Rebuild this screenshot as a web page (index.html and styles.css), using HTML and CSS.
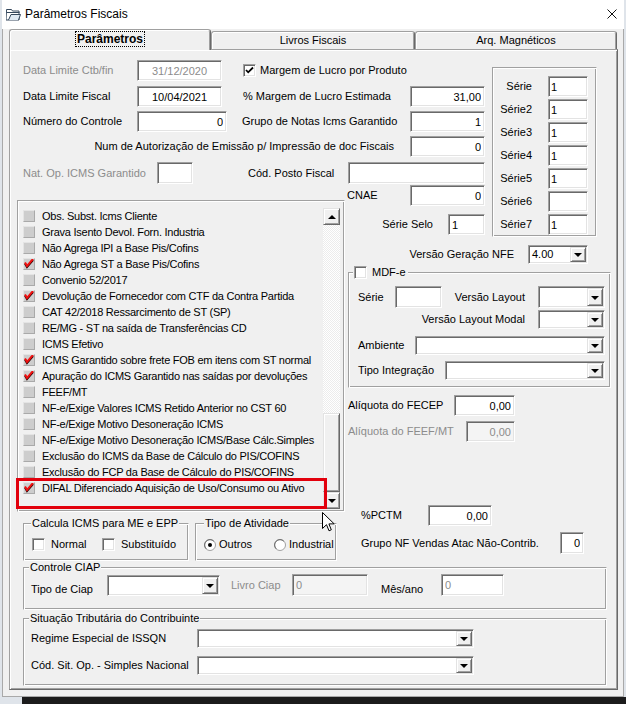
FILE: index.html
```html
<!DOCTYPE html>
<html lang="pt-BR">
<head>
    <meta charset="UTF-8">
    <title>Parâmetros Fiscais</title>
    <link rel="stylesheet" href="styles.css">
</head>
<body>
<div class="window">
    <div class="titlebar">
        <svg class="app-icon" width="15" height="13" viewBox="0 0 15 13">
            <path d="M0.5 1.5h5l1 1.5h6.5v9h-13z" fill="#fff" stroke="#34475c"/>
            <path d="M0.5 4.5h13" stroke="#34475c"/>
            <path d="M2.5 12l2.5-5.5h9.5l-2 5.5" fill="#dfe9f3" stroke="#34475c"/>
        </svg>
        <span class="title">Parâmetros Fiscais</span>
        <svg class="close" width="10" height="10" viewBox="0 0 10 10">
            <path d="M0.5 0.5L9.5 9.5M9.5 0.5L0.5 9.5" stroke="#111" stroke-width="1"/>
        </svg>
    </div>

    <div class="tabs">
        <div class="tab active"><span class="focus">Parâmetros</span></div>
        <div class="tab">Livros Fiscais</div>
        <div class="tab last">Arq. Magnéticos</div>
    </div>

    <div class="page">
        <!-- campos do topo -->
        <div class="top-fields">
            <div class="row">
                <label class="lbl w114 dis">Data Limite Ctb/fin</label>
                <input class="edit w85 center dis" value="31/12/2020" readonly>
                <span class="check ml21"><svg viewBox="0 0 9 9" width="9" height="9"><path d="M1 4l2.2 2.3L8 1.5" fill="none" stroke="#000" stroke-width="1.8"/></svg></span>
                <label class="lbl ml4">Margem de Lucro por Produto</label>
            </div>
            <div class="row mt5">
                <label class="lbl w114">Data Limite Fiscal</label>
                <input class="edit w85 center" value="10/04/2021" readonly>
                <label class="lbl ml21">% Margem de Lucro Estimada</label>
                <input class="edit w75 right push" value="31,00" readonly>
            </div>
            <div class="row mt4">
                <label class="lbl w114">Número do Controle</label>
                <input class="edit w90 right" value="0" readonly>
                <label class="lbl ml15">Grupo de Notas Icms Garantido</label>
                <input class="edit w75 right push" value="1" readonly>
            </div>
            <div class="row mt4">
                <label class="lbl push">Num de Autorização de Emissão p/ Impressão de doc Fiscais</label>
                <input class="edit w75 right ml16" value="0" readonly>
            </div>
            <div class="row tall mt5">
                <label class="lbl w134 dis">Nat. Op. ICMS Garantido</label>
                <input class="edit w36" value="" readonly>
                <label class="lbl ml55">Cód. Posto Fiscal</label>
                <input class="edit w137 push" value="" readonly>
            </div>
        </div>

        <!-- séries -->
        <div class="series etched">
            <div class="row"><label class="lbl">Série</label><input class="edit" value="1" readonly></div>
            <div class="row"><label class="lbl">Série2</label><input class="edit" value="1" readonly></div>
            <div class="row"><label class="lbl">Série3</label><input class="edit" value="1" readonly></div>
            <div class="row"><label class="lbl">Série4</label><input class="edit" value="1" readonly></div>
            <div class="row"><label class="lbl">Série5</label><input class="edit" value="1" readonly></div>
            <div class="row"><label class="lbl">Série6</label><input class="edit" value="" readonly></div>
            <div class="row"><label class="lbl">Série7</label><input class="edit" value="1" readonly></div>
        </div>

        <div class="mid-fields">
            <div class="row">
                <label class="lbl">CNAE</label>
                <input class="edit w75 right push" value="0" readonly>
            </div>
            <div class="row mt8">
                <label class="lbl push">Série Selo</label>
                <input class="edit w37 ml15" value="1" readonly>
            </div>
        </div>

        <!-- lista de opções -->
        <div class="options etched">
            <div class="checklist">
                <div class="items">
                    <div class="item"><span class="box"></span>Obs. Subst. Icms Cliente</div>
                    <div class="item"><span class="box"></span>Grava Isento Devol. Forn. Industria</div>
                    <div class="item"><span class="box"></span>Não Agrega IPI a Base Pis/Cofins</div>
                    <div class="item"><span class="box"><svg class="tick" width="10" height="10" viewBox="0 0 10 10"><path d="M1 4.5l2 3.5 6-7" fill="none" stroke="#200" stroke-width="2"/><path d="M1 3.5l2 3.5 6-7" fill="none" stroke="#f01010" stroke-width="2"/></svg></span>Não Agrega ST a Base Pis/Cofins</div>
                    <div class="item"><span class="box"></span>Convenio 52/2017</div>
                    <div class="item"><span class="box"><svg class="tick" width="10" height="10" viewBox="0 0 10 10"><path d="M1 4.5l2 3.5 6-7" fill="none" stroke="#200" stroke-width="2"/><path d="M1 3.5l2 3.5 6-7" fill="none" stroke="#f01010" stroke-width="2"/></svg></span>Devolução de Fornecedor com CTF da Contra Partida</div>
                    <div class="item"><span class="box"></span>CAT 42/2018 Ressarcimento de ST (SP)</div>
                    <div class="item"><span class="box"></span>RE/MG - ST na saída de Transferências CD</div>
                    <div class="item"><span class="box"></span>ICMS Efetivo</div>
                    <div class="item"><span class="box"><svg class="tick" width="10" height="10" viewBox="0 0 10 10"><path d="M1 4.5l2 3.5 6-7" fill="none" stroke="#200" stroke-width="2"/><path d="M1 3.5l2 3.5 6-7" fill="none" stroke="#f01010" stroke-width="2"/></svg></span>ICMS Garantido sobre frete FOB em itens com ST normal</div>
                    <div class="item"><span class="box"><svg class="tick" width="10" height="10" viewBox="0 0 10 10"><path d="M1 4.5l2 3.5 6-7" fill="none" stroke="#200" stroke-width="2"/><path d="M1 3.5l2 3.5 6-7" fill="none" stroke="#f01010" stroke-width="2"/></svg></span>Apuração do ICMS Garantido nas saídas por devoluções</div>
                    <div class="item"><span class="box"></span>FEEF/MT</div>
                    <div class="item"><span class="box"></span>NF-e/Exige Valores ICMS Retido Anterior no CST 60</div>
                    <div class="item"><span class="box"></span>NF-e/Exige Motivo Desoneração ICMS</div>
                    <div class="item"><span class="box"></span>NF-e/Exige Motivo Desoneração ICMS/Base Cálc.Simples</div>
                    <div class="item"><span class="box"></span>Exclusão do ICMS da Base de Cálculo do PIS/COFINS</div>
                    <div class="item"><span class="box"></span>Exclusão do FCP da Base de Cálculo do PIS/COFINS</div>
                    <div class="item marked"><span class="box"><svg class="tick" width="10" height="10" viewBox="0 0 10 10"><path d="M1 4.5l2 3.5 6-7" fill="none" stroke="#200" stroke-width="2"/><path d="M1 3.5l2 3.5 6-7" fill="none" stroke="#f01010" stroke-width="2"/></svg></span>DIFAL Diferenciado Aquisição de Uso/Consumo ou Ativo</div>
                </div>
                <div class="scrollbar">
                    <div class="raised sb-btn"><span class="arrow-up"></span></div>
                    <div class="track"></div>
                    <div class="raised thumb"></div>
                    <div class="raised sb-btn"><span class="arrow-down"></span></div>
                </div>
            </div>
        </div>

        <!-- coluna direita -->
        <div class="right-col">
            <div class="row short nfe">
                <label class="lbl">Versão Geração NFE</label>
                <div class="combo w60 ml14"><span class="value">4.00</span><span class="raised drop"><span class="arrow-down"></span></span></div>
            </div>

            <fieldset class="group mdfe">
                <legend><span class="check"></span><span class="legend-text">MDF-e</span></legend>
                <div class="row tall">
                    <label class="lbl w37">Série</label>
                    <input class="edit w47" value="" readonly>
                    <label class="lbl push">Versão Layout</label>
                    <div class="combo w67 ml13"><span class="value"></span><span class="raised drop"><span class="arrow-down"></span></span></div>
                </div>
                <div class="row short mt2">
                    <label class="lbl push">Versão Layout Modal</label>
                    <div class="combo w67 ml13"><span class="value"></span><span class="raised drop"><span class="arrow-down"></span></span></div>
                </div>
                <div class="row short mt7">
                    <label class="lbl">Ambiente</label>
                    <div class="combo w190 push"><span class="value"></span><span class="raised drop"><span class="arrow-down"></span></span></div>
                </div>
                <div class="row short mt6">
                    <label class="lbl">Tipo Integração</label>
                    <div class="combo w160 push"><span class="value"></span><span class="raised drop"><span class="arrow-down"></span></span></div>
                </div>
            </fieldset>

            <div class="row mt7 ml3">
                <label class="lbl w106">Alíquota do FECEP</label>
                <input class="edit w61 right" value="0,00" readonly>
            </div>
            <div class="row mt5 ml3">
                <label class="lbl w118 dis">Alíquota do FEEF/MT</label>
                <input class="edit w49 right dis flat" value="0,00" readonly>
            </div>
            <div class="row mt63 ml16">
                <label class="lbl w67">%PCTM</label>
                <input class="edit w64 right" value="0,00" readonly>
            </div>
            <div class="row tall mt6 ml16">
                <label class="lbl w199">Grupo NF Vendas Atac Não-Contrib.</label>
                <input class="edit w24 right" value="0" readonly>
            </div>
        </div>

        <!-- grupos de ICMS -->
        <div class="icms-groups">
            <fieldset class="group small calc">
                <legend>Calcula ICMS para ME e EPP</legend>
                <div class="opts">
                    <div class="opt w70"><span class="check"></span><span class="opt-text">Normal</span></div>
                    <div class="opt"><span class="check"></span><span class="opt-text">Substituído</span></div>
                </div>
            </fieldset>
            <fieldset class="group small atividade">
                <legend>Tipo de Atividade</legend>
                <div class="opts">
                    <div class="opt w70">
                        <svg class="radio" width="12" height="12" viewBox="0 0 12 12"><circle cx="6" cy="6" r="5.5" fill="#fff" stroke="#a0a0a0"/><path d="M2.2 9.8A5 5 0 0 1 9.8 2.2" fill="none" stroke="#696969"/><circle cx="6" cy="6" r="2" fill="#000"/></svg>
                        <span class="opt-text tight">Outros</span>
                    </div>
                    <div class="opt">
                        <svg class="radio" width="12" height="12" viewBox="0 0 12 12"><circle cx="6" cy="6" r="5.5" fill="#fff" stroke="#a0a0a0"/><path d="M2.2 9.8A5 5 0 0 1 9.8 2.2" fill="none" stroke="#696969"/></svg>
                        <span class="opt-text tight">Industrial</span>
                    </div>
                </div>
            </fieldset>
        </div>

        <fieldset class="group ciap">
            <legend>Controle CIAP</legend>
            <div class="row tall">
                <label class="lbl w76 low">Tipo de Ciap</label>
                <div class="combo w113 h21"><span class="value"></span><span class="raised drop"><span class="arrow-down"></span></span></div>
                <label class="lbl w61 ml11 dis">Livro Ciap</label>
                <input class="edit w76 dis flat" value="0" readonly>
                <label class="lbl w60 ml13 low">Mês/ano</label>
                <input class="edit w63 dis" value="0" readonly>
            </div>
        </fieldset>

        <fieldset class="group situacao">
            <legend>Situação Tributária do Contribuinte</legend>
            <div class="row short">
                <label class="lbl w166">Regime Especial de ISSQN</label>
                <div class="combo w277"><span class="value"></span><span class="raised drop"><span class="arrow-down"></span></span></div>
            </div>
            <div class="row short mt8">
                <label class="lbl w166">Cód. Sit. Op. - Simples Nacional</label>
                <div class="combo w277"><span class="value"></span><span class="raised drop"><span class="arrow-down"></span></span></div>
            </div>
        </fieldset>
    </div>
</div>

<div class="desktop"></div>

<svg class="cursor" width="13" height="21" viewBox="0 0 13 21">
    <path d="M0.5 0.5V16.5L4.5 12.7L7 18.8L9.3 17.8L6.9 11.9H12.2Z" fill="#fff" stroke="#000"/>
</svg>
</body>
</html>
```

FILE: styles.css
```css
* {
    box-sizing: border-box;
}
body {
    margin: 0;
    position: relative;
    width: 626px;
    height: 704px;
    overflow: hidden;
    background-color: #dfe4ea;
    font: 11px/13px "Liberation Sans", Arial, sans-serif;
    color: #000;
}

/* janela */
.window {
    margin-left: 2px;
    width: 622px;
    height: 697px;
    background-color: #f0f0f0;
    border: 1px solid #a9a9a9;
    border-top: none;
}
.titlebar {
    display: flex;
    align-items: center;
    height: 29px;
    padding: 0 7px 1px 4px;
    margin-left: -1px;
    margin-right: -1px;
    background-color: #fff;
}
.app-icon {
    margin-top: 1px;
}
.title {
    margin-left: 4px;
    font-size: 12px;
    color: #000;
}
.close {
    margin-left: auto;
}
.desktop {
    position: absolute;
    left: 22px;
    right: 0;
    bottom: 0;
    height: 7px;
    background-color: #1c1c1c;
}
.cursor {
    position: absolute;
    left: 322px;
    top: 512px;
}

/* abas */
.tabs {
    display: flex;
    align-items: flex-end;
    height: 20px;
    margin-left: 6px;
}
.tab {
    width: 204px;
    height: 18px;
    text-align: center;
    line-height: 17px;
    border: 1px solid;
    border-color: #a0a0a0 #696969 transparent #a0a0a0;
    border-bottom: none;
    border-radius: 3px 3px 0 0;
    box-shadow: inset 1px 1px #fff, inset -1px 0 #a0a0a0;
    background-color: #f0f0f0;
}
.tab.last {
    width: 202px;
}
.tab.active {
    position: relative;
    z-index: 1;
    width: 202px;
    height: 21px;
    margin-bottom: -1px;
    line-height: 19px;
    font-weight: bold;
}
.focus {
    display: inline-block;
    padding: 0 1px;
    line-height: 14px;
    outline: 1px dotted #000;
    font-size: 12px;
}

/* página */
.page {
    display: grid;
    grid-template-columns: 328px 147px 119px;
    grid-template-rows: 127px 55px 276px 45px auto auto;
    margin-left: 6px;
    width: 609px;
    height: 641px;
    padding: 8px 6px 0 7px;
    border: 1px solid;
    border-color: #a0a0a0 #696969 #696969 #a0a0a0;
    box-shadow: inset 1px 1px #fff, inset -1px -1px #a0a0a0;
}

.row {
    display: flex;
    align-items: center;
    height: 21px;
}
.row.tall {
    height: 22px;
}
.row.short {
    height: 19px;
}
.lbl {
    white-space: nowrap;
}
.dis {
    color: #8c8c8c;
}

/* campos */
.edit {
    height: 100%;
    margin-top: 0;
    margin-bottom: 0;
    padding: 0 3px;
    font: inherit;
    color: #000;
    background-color: #fff;
    border: 1px solid;
    border-color: #a0a0a0 #fff #fff #a0a0a0;
    box-shadow: inset 1px 1px #696969, inset -1px -1px #e3e3e3;
    outline: none;
}
.edit.dis {
    color: #8c8c8c;
}
.edit.flat {
    background-color: #f4f4f4;
}
.edit.center {
    text-align: center;
}
.edit.right {
    text-align: right;
}
.combo {
    display: flex;
    height: 100%;
    padding: 1px;
    background-color: #fff;
    border: 1px solid;
    border-color: #a0a0a0 #fff #fff #a0a0a0;
    box-shadow: inset 1px 1px #696969, inset -1px -1px #e3e3e3;
}
.combo.h21 {
    height: 21px;
}
.combo .value {
    flex: 1;
    padding-left: 2px;
    line-height: 14px;
}
.raised {
    background-color: #f0f0f0;
    border: 1px solid;
    border-color: #e3e3e3 #696969 #696969 #e3e3e3;
    box-shadow: inset 1px 1px #fff, inset -1px -1px #a0a0a0;
}
.drop {
    display: flex;
    align-items: center;
    justify-content: center;
    width: 16px;
}
.arrow-down,
.arrow-up {
    width: 0;
    height: 0;
    border-left: 4px solid transparent;
    border-right: 4px solid transparent;
}
.arrow-down {
    border-top: 4px solid #000;
    margin-top: 1px;
}
.arrow-up {
    border-bottom: 4px solid #000;
}

.check {
    display: inline-flex;
    align-items: center;
    justify-content: center;
    flex: none;
    width: 13px;
    height: 13px;
    background-color: #fff;
    border: 1px solid;
    border-color: #a0a0a0 #fff #fff #a0a0a0;
    box-shadow: inset 1px 1px #696969, inset -1px -1px #e3e3e3;
    vertical-align: top;
}

/* bloco do topo */
.top-fields {
    grid-column: 1 / 3;
    grid-row: 1;
    display: flex;
    flex-direction: column;
    padding: 2px 7px 0 6px;
}

.etched {
    border: 1px solid;
    border-color: #a0a0a0 #fff #fff #a0a0a0;
    box-shadow: inset 1px 1px #fff, inset -1px -1px #a0a0a0;
}

.series {
    grid-column: 3;
    grid-row: 1 / 3;
    align-self: start;
    display: flex;
    flex-direction: column;
    gap: 2px;
    width: 105px;
    margin-top: 9px;
    padding: 8px 0 1px;
}
.series .lbl {
    width: 39px;
    text-align: right;
}
.series .edit {
    width: 40px;
    margin-left: 16px;
    padding-left: 2px;
}

.mid-fields {
    grid-column: 2;
    grid-row: 2;
    display: flex;
    flex-direction: column;
    padding: 0 7px 0 2px;
}

/* lista de opções */
.options {
    grid-column: 1;
    grid-row: 2 / 4;
    align-self: start;
    width: 328px;
    height: 312px;
    margin-top: 15px;
    padding: 7px 4px 0 2px;
}
.checklist {
    display: flex;
    height: 302px;
}
.items {
    width: 303px;
    letter-spacing: -0.25px;
}
.item {
    display: flex;
    align-items: center;
    height: 16px;
    padding-left: 3px;
    white-space: nowrap;
}
.item.marked {
    position: relative;
}
.item.marked::after {
    content: "";
    position: absolute;
    left: -4px;
    top: -2px;
    width: 305px;
    height: 25px;
    border: 3px solid #e2000c;
}
.box {
    display: flex;
    flex: none;
    width: 12px;
    height: 12px;
    margin-right: 7px;
    background-color: #cdcdcd;
    border: 1px solid;
    border-color: #e4e4e4 #a9a9a9 #a9a9a9 #e4e4e4;
}

.scrollbar {
    display: flex;
    flex-direction: column;
    width: 17px;
}
.sb-btn {
    display: flex;
    align-items: center;
    justify-content: center;
    height: 17px;
}
.track {
    height: 188px;
    background: repeating-conic-gradient(#fff 0 25%, #ececec 0 50%) 0 0 / 2px 2px;
}
.thumb {
    height: 79px;
}

/* coluna direita */
.right-col {
    grid-column: 2 / 4;
    grid-row: 3 / 5;
    display: flex;
    flex-direction: column;
}
.nfe {
    justify-content: flex-end;
    margin-top: 5px;
    padding-right: 23px;
}

/* o legend é deslocado pelo padding do fieldset, por isso as margens negativas */
.group {
    margin: 0;
    padding: 0;
    min-width: 0;
    border: 1px solid;
    border-color: #a0a0a0 #fff #fff #a0a0a0;
    box-shadow: inset 1px 1px #fff, inset -1px -1px #a0a0a0;
}
.group legend {
    padding: 0 1px;
    line-height: 13px;
    background-color: #f0f0f0;
}
.mdfe {
    width: 263px;
    margin: 2px 0 0 3px;
    padding: 7px 5px 7px 9px;
}
.mdfe legend {
    margin-left: -5px;
    padding: 0 2px 0 1px;
}
.legend-text {
    margin-left: 5px;
}

/* grupos de baixo */
.icms-groups {
    grid-column: 1;
    grid-row: 4;
    display: flex;
    gap: 6px;
    margin-top: 1px;
    padding-left: 6px;
}
.group.small {
    padding: 8px 0 4px 8px;
}
.calc legend {
    margin-left: -1px;
}
.calc {
    width: 166px;
}
.atividade {
    width: 142px;
    padding-left: 7px;
}
.atividade legend {
    margin-left: 0;
}
.opts {
    display: flex;
    height: 13px;
}
.opt {
    display: flex;
    align-items: center;
}
.opt-text {
    margin-left: 6px;
}
.opt-text.tight {
    margin-left: 3px;
}

.ciap {
    grid-column: 1 / 4;
    grid-row: 5;
    width: 584px;
    margin-left: 6px;
    padding: 0 0 9px 7px;
}
.ciap legend,
.situacao legend {
    margin-left: -2px;
}
.low {
    align-self: flex-end;
}
.situacao {
    grid-column: 1 / 4;
    grid-row: 6;
    align-self: start;
    width: 584px;
    margin: 2px 0 0 6px;
    padding: 4px 0 10px 7px;
}

/* larguras e espaçamentos */
.w24 { width: 24px; }
.w36 { width: 36px; }
.w37 { width: 37px; }
.w47 { width: 47px; }
.w49 { width: 49px; }
.w60 { width: 60px; }
.w61 { width: 61px; }
.w63 { width: 63px; }
.w64 { width: 64px; }
.w67 { width: 67px; }
.w70 { width: 70px; }
.w75 { width: 75px; }
.w76 { width: 76px; }
.w85 { width: 85px; }
.w90 { width: 90px; }
.w106 { width: 106px; }
.w113 { width: 113px; }
.w114 { width: 114px; }
.w118 { width: 118px; }
.w134 { width: 134px; }
.w137 { width: 137px; }
.w160 { width: 160px; }
.w166 { width: 166px; }
.w190 { width: 190px; }
.w199 { width: 199px; }
.w277 { width: 277px; }
.ml3 { margin-left: 3px; }
.ml4 { margin-left: 4px; }
.ml11 { margin-left: 11px; }
.ml13 { margin-left: 13px; }
.ml14 { margin-left: 14px; }
.ml15 { margin-left: 15px; }
.ml16 { margin-left: 16px; }
.ml21 { margin-left: 21px; }
.ml55 { margin-left: 55px; }
.mt2 { margin-top: 2px; }
.mt4 { margin-top: 4px; }
.mt5 { margin-top: 5px; }
.mt6 { margin-top: 6px; }
.mt7 { margin-top: 7px; }
.mt8 { margin-top: 8px; }
.mt63 { margin-top: 63px; }
.push { margin-left: auto; }
```
